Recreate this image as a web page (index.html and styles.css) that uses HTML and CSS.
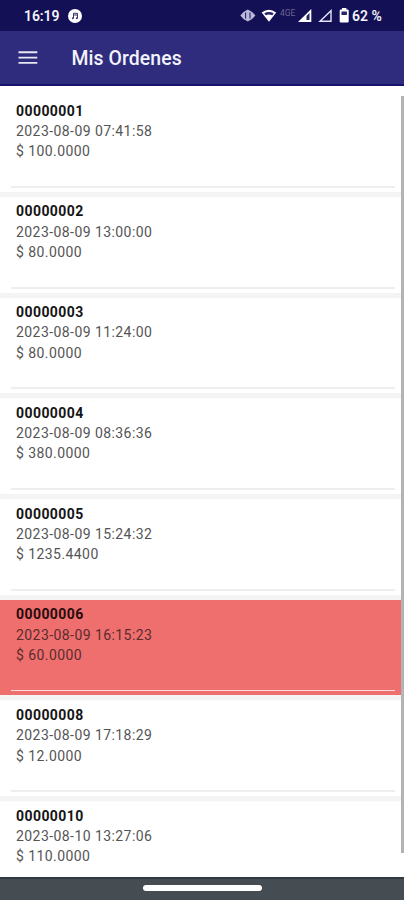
FILE: index.html
```html
<!DOCTYPE html>
<html lang="es">
<head>
<meta charset="utf-8">
<title>Mis Ordenes</title>
<link rel="stylesheet" href="styles.css">
</head>
<body>
<div class="screen">
  <header class="status">
    <span class="time">16:19</span>
    <svg class="music" width="14" height="14" viewBox="0 0 14 14"><circle cx="7" cy="7" r="7" fill="#fff"/><path d="M5.5 9V4.3h4V9M5.5 6h4" fill="none" stroke="#39366f" stroke-width="1"/><circle cx="4.9" cy="9.2" r="1" fill="#39366f"/><circle cx="8.8" cy="9.2" r="1" fill="#39366f"/></svg>
    <svg class="icons" width="112" height="20" viewBox="0 0 112 20">
      <path d="M.3 10.500 3.500 7 7.800 4.500 12.100 7l3.300 3.500-3.300 3.500-4.300 2.500L3.500 14z" fill="#b9b8d8"/>
      <path d="M5.600 7.500v6M10 7.500v6" stroke="#252268" stroke-width="1.100"/>
      <path d="M21.600 7.500q7.300-5.500 14.600 0L29 16.800z" fill="#fff"/>
      <path d="M24.300 8.300q4.700-2.800 9.400 0l-1.400 1.900q-3.300-1.500-6.600 0z" fill="#252268"/>
      <path d="M71.300 4v13H58z" fill="#fff"/><path d="M69.500 8v7h-3V11z" fill="#252268"/>
      <path d="M91 5.700v10.500H80z" fill="none" stroke="#e6e5f4" stroke-width="1.400"/>
      <rect x="99.700" y="4.500" width="9" height="13" rx="1.200" fill="#fff"/><rect x="102" y="3" width="4.400" height="2" fill="#fff"/><rect x="101.500" y="6.500" width="5.400" height="3.500" fill="#252268"/>
      <text x="40" y="11" class="net">4GE</text>
    </svg>
    <span class="pct">62 %</span>
  </header>
  <nav class="bar">
    <svg width="20" height="16" viewBox="0 0 20 16"><path d="M.5 2.300h18.800M.5 7.600h18.800M.5 12.900h18.800" stroke="#e8e8f4" stroke-width="1.900"/></svg>
    <h1>Mis Ordenes</h1>
  </nav>
  <main class="list">
    <article class="order"><b>00000001</b><span>2023-08-09 07:41:58</span><span>$ 100.0000</span></article>
    <article class="order"><b>00000002</b><span>2023-08-09 13:00:00</span><span>$ 80.0000</span></article>
    <article class="order"><b>00000003</b><span>2023-08-09 11:24:00</span><span>$ 80.0000</span></article>
    <article class="order"><b>00000004</b><span>2023-08-09 08:36:36</span><span>$ 380.0000</span></article>
    <article class="order"><b>00000005</b><span>2023-08-09 15:24:32</span><span>$ 1235.4400</span></article>
    <article class="order alert"><b>00000006</b><span>2023-08-09 16:15:23</span><span>$ 60.0000</span></article>
    <article class="order"><b>00000008</b><span>2023-08-09 17:18:29</span><span>$ 12.0000</span></article>
    <article class="order"><b>00000010</b><span>2023-08-10 13:27:06</span><span>$ 110.0000</span></article>
    <div class="scrollbar"></div>
  </main>
  <footer class="gesture"><div class="pill"></div></footer>
</div>
</body>
</html>
```
FILE: styles.css
```css
* { box-sizing: border-box; }
body { margin: 0; font-family: Roboto, sans-serif; background: #fff; }
.screen { width: 404px; height: 900px; display: flex; flex-direction: column; overflow: hidden; }
.status { height: 31px; flex: none; background: #141056; color: #f4f4fa; display: flex; align-items: center; padding: 1px 21px 0 24px; font-size: 14px; font-weight: 600; }
.time { width: 36px; letter-spacing: -0.1px; }
.music { margin-left: 8px; }
.icons { margin-left: auto; margin-top: -2px; }
.net { font-size: 8.500px; font-weight: 400; fill: #68658f; }
.pct { width: 31px; font-size: 14px; letter-spacing: 0; white-space: nowrap; }
.bar { height: 55px; flex: none; background: #2f2c7e; border-bottom: 2px solid #19136f; display: flex; align-items: center; padding-left: 18px; gap: 33.500px; color: #f3f3fa; }
h1 { margin: 3px 0 0; font-size: 19.400px; font-weight: 500; line-height: 24px; letter-spacing: 0.1px; }
.list { flex: 1; min-height: 0; position: relative; overflow: hidden; padding-top: 10.500px; background: #fff; }
.order { height: 95.400px; margin-bottom: 5.300px; padding: 4.300px 16px 0; display: flex; flex-direction: column; position: relative; font-size: 14px; line-height: 20.300px; letter-spacing: 0.43px; color: #555; box-shadow: 0 5.300px #f4f4f4; }
.order b { font-weight: 700; color: #151515; }
.order::after { content: ""; position: absolute; left: 11px; right: 9px; bottom: 4px; height: 2px; background: #eee; }
.alert { background: #ef6f6f; color: #592c2c; }
.alert b { color: #260b0b; }
.alert::after { background: #fbdcdc; height: 1.500px; }
.scrollbar { position: absolute; right: 0; top: 10px; width: 3px; height: 757px; background: #b3b3b3; }
.gesture { height: 23px; flex: none; background: #454d52; border-top: 2px solid #303a40; display: flex; justify-content: center; padding-top: 6px; }
.pill { width: 119px; height: 6px; border-radius: 3px; background: #fff; }
```
